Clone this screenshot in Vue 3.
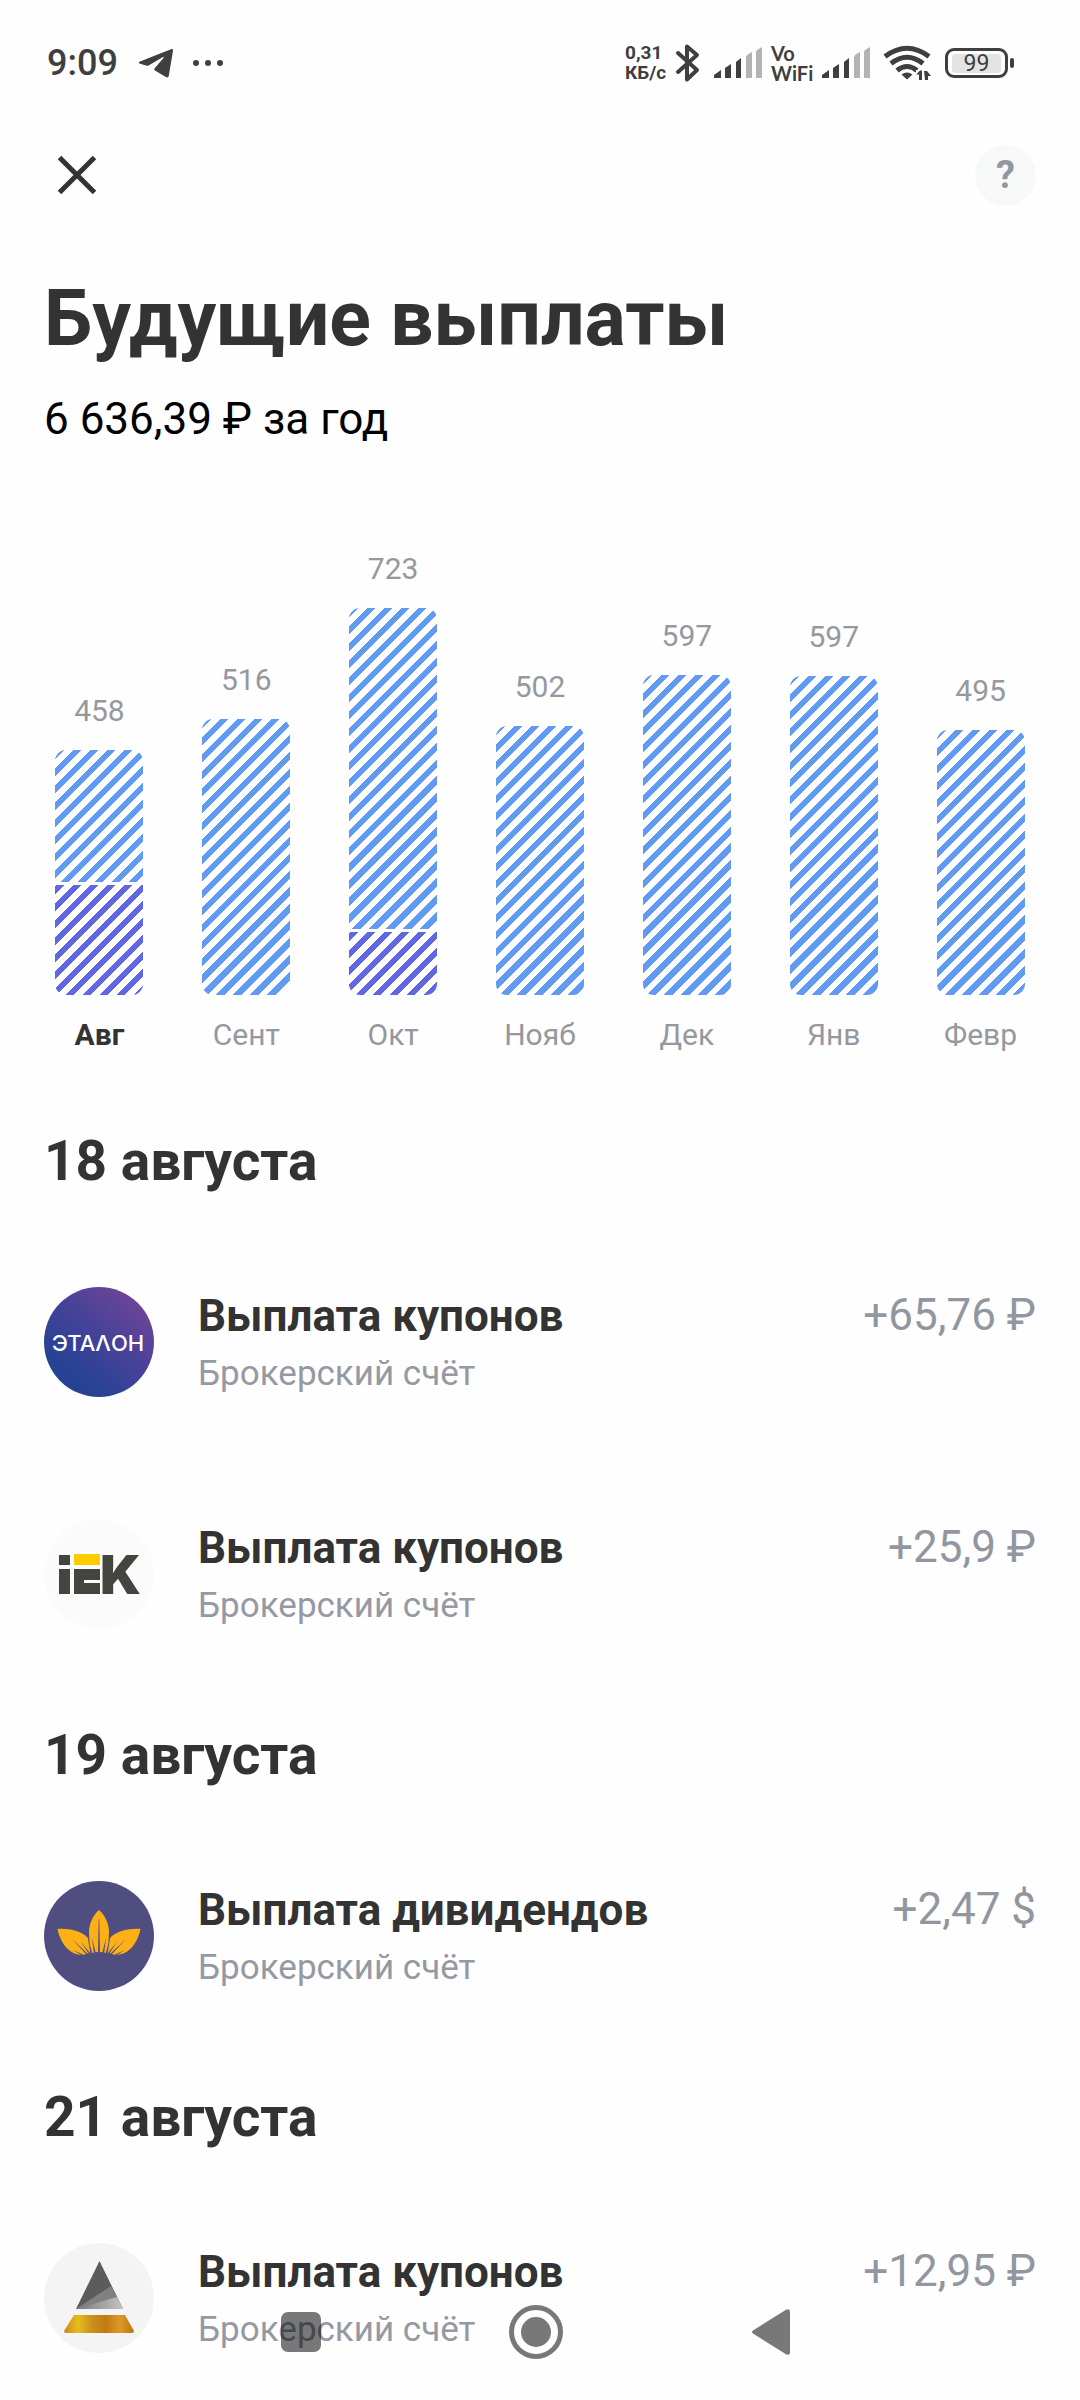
<script setup>
const months = [
  { name: 'Авг', value: 458, segments: [{ kind: 'coupon', h: 132 }, { kind: 'dividend', h: 110 }], active: true },
  { name: 'Сент', value: 516, segments: [{ kind: 'coupon', h: 276 }] },
  { name: 'Окт', value: 723, segments: [{ kind: 'coupon', h: 321 }, { kind: 'dividend', h: 63 }] },
  { name: 'Нояб', value: 502, segments: [{ kind: 'coupon', h: 269 }] },
  { name: 'Дек', value: 597, segments: [{ kind: 'coupon', h: 320 }] },
  { name: 'Янв', value: 597, segments: [{ kind: 'coupon', h: 319 }] },
  { name: 'Февр', value: 495, segments: [{ kind: 'coupon', h: 265 }] },
]

const groups = [
  {
    date: '18 августа',
    items: [
      { logo: 'etalon', title: 'Выплата купонов', amount: '+65,76 ₽' },
      { logo: 'iek', title: 'Выплата купонов', amount: '+25,9 ₽' },
    ],
  },
  { date: '19 августа', items: [{ logo: 'leaf', title: 'Выплата дивидендов', amount: '+2,47 $' }] },
  { date: '21 августа', items: [{ logo: 'pyramid', title: 'Выплата купонов', amount: '+12,95 ₽' }] },
]
</script>

<template>
  <div class="page">
    <div class="status">
      <div class="status-left">
        <span class="time">9:09</span>
        <svg class="telegram" width="36" height="30" viewBox="0 0 36 30">
          <path d="M2 13.500 33 1.200c1.300-.5 2.200.2 2 1.600l-4.200 25c-.3 1.600-1.600 2-2.900 1.200L17 22.600c-1-.7-1-1.600-.1-2.500L25.500 10c.6-.8 0-1.300-.9-.8L11 17.200c-1 .6-2 .7-3 .4l-6-1.800c-1.500-.5-1.500-1.600 0-2.300z" />
        </svg>
        <svg width="32" height="8" viewBox="0 0 32 8">
          <circle cx="4" cy="4" r="3" /><circle cx="16" cy="4" r="3" /><circle cx="28" cy="4" r="3" />
        </svg>
      </div>
      <div class="status-right">
        <div class="speed"><span>0,31</span><span>КБ/с</span></div>
        <svg class="bluetooth" width="26" height="40" viewBox="0 0 26 40">
          <path d="M3 10 22 27 12 36.500V3.500L22 12 3 29" />
        </svg>
        <svg class="signal" width="50" height="32" viewBox="0 0 50 32">
          <path d="M1 31v-3l7-5v8zM12 31V21l6-4v14zM23 31V15l5-4v20z" />
          <path class="dim" d="M33 31V10q0-2 6-5v26zM43 31V5q0-2 6-5v31z" />
        </svg>
        <div class="vowifi"><span>Vo</span><span>WiFi</span></div>
        <svg class="signal" width="50" height="32" viewBox="0 0 50 32">
          <path d="M1 31v-3l7-5v8zM12 31V21l6-4v14zM23 31V15l5-4v20z" />
          <path class="dim" d="M33 31V10q0-2 6-5v26zM43 31V5q0-2 6-5v31z" />
        </svg>
        <svg class="wifi" width="48" height="36" viewBox="0 0 48 36">
          <path class="arc" d="M2 11.500Q24-5 46 11.500M8 18.500Q24 6 40 18.500M14 25.500Q24 17.500 34 25.500" />
          <path d="M24 34.500 18.500 29.500Q24 25.500 29.500 29.500z" />
          <path class="halo" d="M33 25h15v10H33z" />
          <path d="M33 29.500 37 25.500h2V35h-3v-5.500zM41 26h3l4 5h-3v4h-3z" />
        </svg>
        <div class="battery"><div class="cell"><span>99</span></div><i></i></div>
      </div>
    </div>

    <header class="toolbar">
      <button class="close" aria-label="Закрыть">
        <svg width="40" height="40" viewBox="0 0 40 40"><path d="M2.500 2.500 37.500 37.500M37.500 2.500 2.500 37.500" /></svg>
      </button>
      <button class="help">?</button>
    </header>

    <main>
      <h1>Будущие выплаты</h1>
      <p class="total">6 636,39 ₽ за год</p>

      <section class="chart">
        <div v-for="m in months" :key="m.name" class="month" :class="{ active: m.active }">
          <span class="value">{{ m.value }}</span>
          <div class="bar">
            <div v-for="s in m.segments" :key="s.kind" class="segment" :class="s.kind" :style="{ height: s.h + 'px' }"></div>
          </div>
          <span class="name">{{ m.name }}</span>
        </div>
      </section>

      <section v-for="g in groups" :key="g.date" class="group">
        <h2>{{ g.date }}</h2>
        <ul>
          <li v-for="item in g.items" :key="item.logo">
            <svg class="logo" width="110" height="110" viewBox="0 0 110 110">
              <template v-if="item.logo === 'etalon'">
                <defs>
                  <linearGradient id="etalon" x1="0.3" y1="0.85" x2="0.9" y2="0.15">
                    <stop offset="0" stop-color="#264294" />
                    <stop offset="0.5" stop-color="#464299" />
                    <stop offset="1" stop-color="#6d4596" />
                  </linearGradient>
                </defs>
                <circle cx="55" cy="55" r="55" fill="url(#etalon)" />
                <text class="etalon" x="54" y="64" text-anchor="middle">ЭТАΛОН</text>
              </template>
              <template v-else-if="item.logo === 'iek'">
                <circle cx="55" cy="55" r="55" fill="#fbfbfb" />
                <g fill="#43463f">
                  <rect x="15" y="36" width="11" height="10" />
                  <rect x="15" y="50" width="11" height="25" />
                  <rect x="30" y="50" width="26" height="25" />
                  <text class="iek" x="56" y="75">K</text>
                </g>
                <rect x="30" y="35" width="26" height="11" fill="#fc0" />
                <rect x="40" y="61" width="16" height="3" fill="#fbfbfb" />
              </template>
              <template v-else-if="item.logo === 'leaf'">
                <circle cx="55" cy="55" r="55" fill="#504d80" />
                <g fill="#fbb016">
                  <path d="M55 29C49 34 45 43 45 51L46 72H64L65 51C65 43 61 34 55 29z" />
                  <path d="M13.500 48C24 47 38 50 44 57L48 73C45 72 42 73 39 74 26 74 17 64 13.500 48z" />
                  <path d="M96.500 48C86 47 72 50 66 57L62 73C65 72 68 73 71 74 84 74 93 64 96.500 48z" />
                </g>
                <g fill="#504d80">
                  <path d="M54.700 38h.6L56 73h-2zM48 57 52 73h-2zM62 57 58 73h2zM43.500 55 48.500 73h-2zM66.500 55 61.500 73h2z" />
                  <path d="M28 58 44 73h-2zM82 58 66 73h2zM29 69 40 74h-3zM81 69 70 74h3z" />
                  <path d="M37 61 47 73h-2zM73 61 63 73h2zM40 76Q55 66 70 76z" />
                </g>
              </template>
              <template v-else>
                <defs>
                  <linearGradient id="gold">
                    <stop offset="0" stop-color="#c98a12" />
                    <stop offset="0.2" stop-color="#e8bc1c" />
                    <stop offset="0.42" stop-color="#c98c1c" />
                    <stop offset="0.6" stop-color="#c47a14" />
                    <stop offset="0.8" stop-color="#dc9a28" />
                    <stop offset="1" stop-color="#bd760f" />
                  </linearGradient>
                  <linearGradient id="facet">
                    <stop offset="0" stop-color="#777" />
                    <stop offset="1" stop-color="#c4c4c4" />
                  </linearGradient>
                </defs>
                <circle cx="55" cy="55" r="55" fill="#f4f4f4" />
                <path d="M55.500 18 79 66H32z" fill="#5c5c5c" />
                <path d="M67 43 79 66H32z" fill="#808080" />
                <path d="M73 54 79 66H32z" fill="url(#facet)" />
                <path d="M30 72H81L90 88q0 2-2 2H22q-2 0-2-2z" fill="url(#gold)" />
              </template>
            </svg>
            <div class="text">
              <h3>{{ item.title }}</h3>
              <p>Брокерский счёт</p>
            </div>
            <span class="amount">{{ item.amount }}</span>
          </li>
        </ul>
      </section>
    </main>

    <nav class="system">
      <button aria-label="Недавние"><svg width="56" height="56" viewBox="0 0 56 56"><rect x="8" y="8" width="40" height="40" rx="7" /></svg></button>
      <button aria-label="Домой"><svg width="56" height="56" viewBox="0 0 56 56"><circle class="ring" cx="28" cy="28" r="24.500" /><circle cx="28" cy="28" r="15" /></svg></button>
      <button aria-label="Назад"><svg width="56" height="56" viewBox="0 0 56 56"><path d="M10 26.500 43 5.800q4-2 4 2v40.400q0 4-4 2L10 29.500q-2-1.500 0-3z" /></svg></button>
    </nav>
  </div>
</template>

<style>
body {
  background: #fefefe;
}
</style>

<style scoped>
.page {
  min-height: 100vh;
  box-sizing: border-box;
  padding-bottom: 47px;
  background: #fefefe;
  color: #333;
  font-family: Roboto, "Noto Sans", sans-serif;
}
h1, h2, h3, p, ul {
  margin: 0;
  padding: 0;
}
button {
  padding: 0;
  border: 0;
  background: none;
  font-family: inherit;
}
svg {
  display: block;
  flex: none;
}
.status {
  display: flex;
  justify-content: space-between;
  align-items: center;
  height: 126px;
  padding: 0 66px 0 47px;
  color: #3f3f3f;
  fill: #3f3f3f;
}
.status-left, .status-right {
  display: flex;
  align-items: center;
}
.time {
  font-size: 36px;
  line-height: 42px;
  font-weight: 500;
}
.telegram {
  margin: 0 18px 0 20px;
}
.speed, .vowifi {
  display: flex;
  flex-direction: column;
  width: 50px;
  line-height: 20px;
  font-weight: 700;
}
.speed {
  font-size: 19px;
}
.vowifi {
  font-family: Lato, sans-serif;
  font-size: 20px;
}
.bluetooth {
  margin-right: 12px;
  fill: none;
  stroke: #3f3f3f;
  stroke-width: 4;
  stroke-linejoin: round;
  stroke-linecap: round;
}
.signal {
  margin-right: 8px;
}
.dim {
  fill: #b3b3b3;
}
.wifi {
  margin: 0 14px 0 4px;
}
.arc {
  fill: none;
  stroke: #3f3f3f;
  stroke-width: 5;
}
.halo {
  fill: #fefefe;
}
.battery {
  display: flex;
  align-items: center;
}
.cell {
  box-sizing: border-box;
  width: 63px;
  height: 30px;
  padding: 3px 4px;
  border: 3px solid #3f3f3f;
  border-radius: 9px;
}
.cell span {
  display: block;
  border-radius: 3px;
  background: #e4e4e4;
  font-size: 23px;
  line-height: 19px;
  text-align: center;
}
.battery i {
  width: 4px;
  height: 10px;
  margin-left: 2px;
  border-radius: 2px;
  background: #3f3f3f;
}
.toolbar {
  display: flex;
  justify-content: space-between;
  align-items: center;
  height: 98px;
  padding: 0 44px;
}
.close {
  display: grid;
  place-items: center;
  width: 66px;
  height: 66px;
  stroke: #333;
  stroke-width: 5;
}
.help {
  width: 61px;
  height: 61px;
  border-radius: 50%;
  background: #f7f9f9;
  color: #9296a1;
  font-size: 38px;
  font-weight: 700;
  line-height: 61px;
}
h1 {
  margin: 49px 44px 28px;
  font-size: 77px;
  line-height: 92px;
  font-weight: 700;
}
.total {
  margin: 0 44px;
  color: #000;
  font-size: 44px;
  line-height: 52px;
}
.chart {
  display: flex;
  align-items: flex-end;
  margin: 106px 26px 75px;
}
.month {
  display: flex;
  flex: 1;
  flex-direction: column;
  align-items: center;
  color: #96989f;
  font-size: 30px;
  line-height: 36px;
}
.bar {
  display: flex;
  flex-direction: column;
  gap: 3px;
  width: 88px;
  margin: 21px 0 22px;
  border-radius: 11px;
  overflow: hidden;
}
.coupon {
  background: repeating-linear-gradient(135deg, #fefefe 0 1px, #609af2 1px 7px, #fefefe 7px 12px);
}
.dividend {
  background: repeating-linear-gradient(135deg, #fefefe 0 1px, #5f67e3 1px 7px, #fefefe 7px 12px);
}
.active .name {
  color: #333;
  font-weight: 700;
}
.group {
  margin: 0 44px 93px;
}
.group:last-child {
  margin-bottom: 0;
}
h2 {
  margin-bottom: 93px;
  font-size: 55px;
  line-height: 66px;
  font-weight: 700;
}
ul {
  display: flex;
  flex-direction: column;
  gap: 122px;
  list-style: none;
}
li {
  display: flex;
  align-items: center;
}
.text {
  display: flex;
  flex: 1;
  flex-direction: column;
  gap: 11px;
  margin-left: 44px;
}
h3 {
  font-size: 44px;
  line-height: 52px;
  font-weight: 700;
}
.text p {
  color: #9699a3;
  font-size: 35px;
  line-height: 42px;
}
.amount {
  align-self: flex-start;
  margin-top: 2px;
  color: #9296a1;
  font-size: 44px;
  line-height: 52px;
}
.etalon {
  fill: #fff;
  font: 500 22px Inter, sans-serif;
}
.iek {
  font: 900 54px Inter, sans-serif;
}
.system {
  position: fixed;
  right: 0;
  bottom: 0;
  left: 0;
  display: flex;
  justify-content: center;
  gap: 179px;
  padding: 40px 8px 40px 0;
  fill: rgba(0, 0, 0, 0.53);
}
.ring {
  fill: none;
  stroke: rgba(0, 0, 0, 0.53);
  stroke-width: 5;
}
</style>
